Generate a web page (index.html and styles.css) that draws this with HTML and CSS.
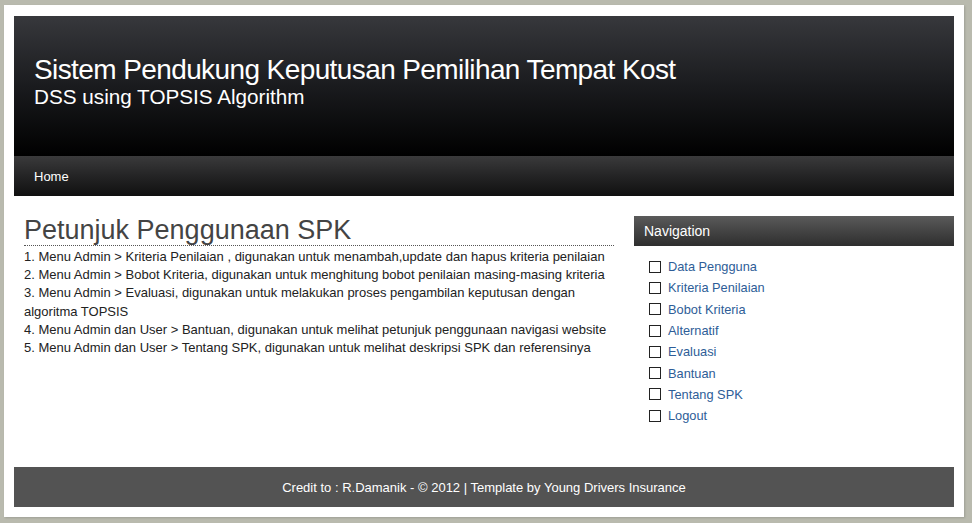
FILE: index.html
```html
<!DOCTYPE html>
<html>
<head>
<meta charset="utf-8">
<link rel="stylesheet" href="styles.css">
</head>
<body>
<div class="page">
  <header class="header">
    <h1 class="site-title">Sistem Pendukung Keputusan Pemilihan Tempat Kost</h1>
    <p class="site-sub">DSS using TOPSIS Algorithm</p>
  </header>
  <nav class="menu"><a href="#">Home</a></nav>
  <div class="main">
    <section class="content">
      <h2 class="content-title">Petunjuk Penggunaan SPK</h2>
      <p class="steps">1. Menu Admin &gt; Kriteria Penilaian , digunakan untuk menambah,update dan hapus kriteria penilaian<br>
      2. Menu Admin &gt; Bobot Kriteria, digunakan untuk menghitung bobot penilaian masing-masing kriteria<br>
      3. Menu Admin &gt; Evaluasi, digunakan untuk melakukan proses pengambilan keputusan dengan algoritma TOPSIS<br>
      4. Menu Admin dan User &gt; Bantuan, digunakan untuk melihat petunjuk penggunaan navigasi website<br>
      5. Menu Admin dan User &gt; Tentang SPK, digunakan untuk melihat deskripsi SPK dan referensinya</p>
    </section>
    <aside class="sidebar">
      <h3 class="side-title">Navigation</h3>
      <ul class="side-list">
        <li><a href="#">Data Pengguna</a></li>
        <li><a href="#">Kriteria Penilaian</a></li>
        <li><a href="#">Bobot Kriteria</a></li>
        <li><a href="#">Alternatif</a></li>
        <li><a href="#">Evaluasi</a></li>
        <li><a href="#">Bantuan</a></li>
        <li><a href="#">Tentang SPK</a></li>
        <li><a href="#">Logout</a></li>
      </ul>
    </aside>
  </div>
  <footer class="footer">Credit to : R.Damanik - © 2012 | Template by Young Drivers Insurance</footer>
</div>
</body>
</html>
```
FILE: styles.css
```css
html, body {
  margin: 0;
  padding: 0;
}
body {
  background: #b9baae;
  font-family: "Liberation Sans", Arial, sans-serif;
  padding: 5px 0 0 4px;
  height: 523px;
  box-sizing: border-box;
  overflow: hidden;
}
.page {
  width: 940px;
  height: 491px;
  background: #fff;
  padding: 11px 10px 10px 10px;
  box-shadow: 1px 1px 2px rgba(0,0,0,0.15);
  display: flex;
  flex-direction: column;
}
.header {
  height: 140px;
  background: linear-gradient(#37383c 0%, #1a1b1e 50%, #000 100%);
  padding: 38px 0 0 20px;
  box-sizing: border-box;
  color: #fff;
}
.site-title {
  margin: 0;
  font-size: 28px;
  font-weight: normal;
  letter-spacing: -0.6px;
  line-height: 32px;
}
.site-sub {
  margin: 0;
  font-size: 20.7px;
  line-height: 22px;
}
.menu {
  height: 40px;
  background: linear-gradient(#3a3a3b 0%, #242425 50%, #101010 100%);
  display: flex;
  align-items: center;
  padding-left: 20px;
}
.menu a {
  color: #fff;
  text-decoration: none;
  font-size: 13px;
}
.main {
  flex: 1;
  display: flex;
  gap: 20px;
  padding: 20px 0 0 10px;
}
.content {
  width: 590px;
}
.content-title {
  margin: 0;
  font-size: 27px;
  font-weight: normal;
  color: #444;
  line-height: 29px;
  border-bottom: 1px dotted #555;
}
.steps {
  margin: 2px 0 0;
  font-size: 13px;
  line-height: 18.2px;
  color: #222;
}
.sidebar {
  width: 320px;
}
.side-title {
  margin: 0;
  height: 30px;
  line-height: 30px;
  padding-left: 10px;
  font-size: 14px;
  font-weight: normal;
  color: #fff;
  background: linear-gradient(#5a5a5a, #2e2e2e);
}
.side-list {
  list-style: none;
  margin: 0;
  padding: 10px 0 0 15px;
}
.side-list li {
  height: 21.3px;
  display: flex;
  align-items: center;
  gap: 7px;
}
.side-list li::before {
  content: "";
  width: 10px;
  height: 10px;
  border: 1px solid #222;
}
.side-list a {
  color: #2e5d97;
  text-decoration: none;
  font-size: 12.8px;
}
.footer {
  margin-top: auto;
  height: 40px;
  background: #535353;
  color: #fff;
  font-size: 13px;
  display: flex;
  align-items: center;
  justify-content: center;
}
```
